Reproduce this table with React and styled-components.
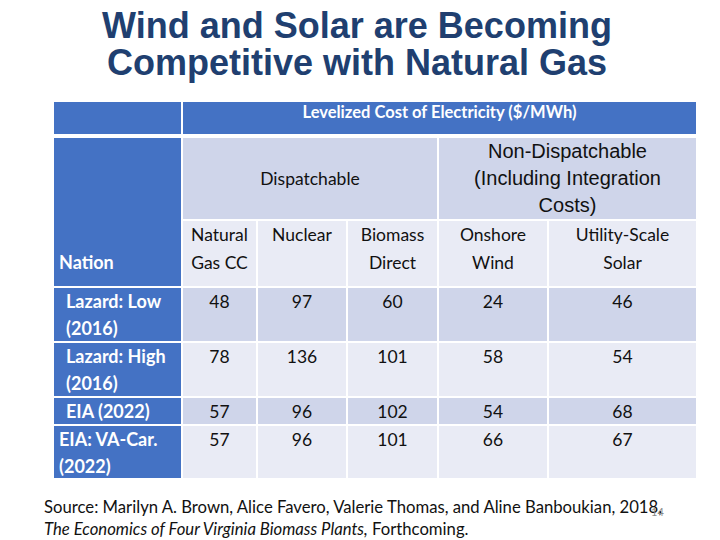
import React from 'react'
import styled, { createGlobalStyle } from 'styled-components'

const GlobalStyle = createGlobalStyle`
  html, body {
    margin: 0;
    padding: 0;
    background: #ffffff;
  }
  body {
    width: 720px;
    height: 540px;
    overflow: hidden;
    font-family: Lato, "Open Sans", sans-serif;
  }
`

const Slide = styled.div`
  width: 720px;
  height: 540px;
  display: flex;
  flex-direction: column;
  position: relative;
`

const Title = styled.h1`
  margin: 0;
  padding: 7px 6px 0 0;
  text-align: center;
  font-family: "Liberation Sans", Arial, sans-serif;
  font-weight: 700;
  font-size: 36px;
  line-height: 37px;
  color: #203f70;
`

const Table = styled.div`
  margin: 21px 0 0 54px;
  width: 642px;
  display: grid;
  grid-template-columns: 127px 73px 88px 89px 108px 147px;
  grid-template-rows: 34px 81px 65px 53px 53px 26px 52px;
  gap: 2px;
`

const HeadCell = styled.div`
  grid-column: ${p => p.$col || 'auto'};
  margin-bottom: 2px;
  background: #4472c4;
  color: #ffffff;
  font-weight: 700;
  font-size: 16.5px;
  line-height: 20px;
  text-align: center;
`

const NationCell = styled.div`
  grid-column: 1;
  grid-row: ${p => p.$row || 'auto'};
  background: #4472c4;
  color: #ffffff;
  font-weight: 700;
  font-size: 18px;
  line-height: 27px;
  padding: 0 0 0 ${p => (p.$indent ? 12 : 5)}px;
  display: flex;
  flex-direction: column;
  justify-content: ${p => (p.$bottom ? 'flex-end' : 'flex-start')};
  padding-bottom: ${p => (p.$bottom ? 10 : 0)}px;
`

const GroupCell = styled.div`
  grid-column: ${p => p.$col};
  background: #cfd5ea;
  color: #111111;
  display: flex;
  align-items: center;
  justify-content: center;
  text-align: center;
  font-size: ${p => (p.$arial ? 20 : 17.5)}px;
  font-family: ${p => (p.$arial ? '"Liberation Sans", Arial, sans-serif' : 'inherit')};
  line-height: 27px;
`

const Cell = styled.div`
  background: ${p => (p.$dark ? '#cfd5ea' : '#e9ebf5')};
  color: #111111;
  font-size: 17.5px;
  line-height: ${p => p.$lh || 27}px;
  text-align: center;
`

const Source = styled.div`
  margin: 18px 0 0 44px;
  font-size: 16.7px;
  line-height: 22px;
  color: #111111;
  position: relative;
  width: 670px;
  white-space: nowrap;
`

const PageNum = styled.span`
  position: absolute;
  left: 607px;
  top: 5px;
  font-size: 11px;
  color: #8a8a8a;
`

const columns = [
  ['Natural', 'Gas CC'],
  ['Nuclear'],
  ['Biomass', 'Direct'],
  ['Onshore', 'Wind'],
  ['Utility-Scale', 'Solar'],
]

const rows = [
  { label: ['Lazard: Low', '(2016)'], indent: true, values: [48, 97, 60, 24, 46] },
  { label: ['Lazard: High', '(2016)'], indent: true, values: [78, 136, 101, 58, 54] },
  { label: ['EIA (2022)'], indent: true, values: [57, 96, 102, 54, 68] },
  { label: ['EIA: VA-Car.', '(2022)'], values: [57, 96, 101, 66, 67] },
]

const Lines = ({ lines }) => lines.map((l, i) => <div key={i}>{l}</div>)

export default function App() {
  return (
    <Slide>
      <GlobalStyle />
      <Title>
        Wind and Solar are Becoming
        <br />
        Competitive with Natural Gas
      </Title>

      <Table>
        <HeadCell $col="1" />
        <HeadCell $col="2 / 7">Levelized Cost of Electricity ($/MWh)</HeadCell>

        <NationCell $row="2 / 4" $bottom>Nation</NationCell>
        <GroupCell $col="2 / 5">Dispatchable</GroupCell>
        <GroupCell $col="5 / 7" $arial>
          Non-Dispatchable
          <br />
          (Including Integration
          <br />
          Costs)
        </GroupCell>

        {columns.map((c, i) => (
          <Cell key={i} $lh={28}>
            <Lines lines={c} />
          </Cell>
        ))}

        {rows.map((r, ri) => (
          <React.Fragment key={ri}>
            <NationCell $indent={r.indent}>
              <Lines lines={r.label} />
            </NationCell>
            {r.values.map((v, vi) => (
              <Cell key={vi} $dark={ri % 2 === 0}>{v}</Cell>
            ))}
          </React.Fragment>
        ))}
      </Table>

      <Source>
        Source: Marilyn A. Brown, Alice Favero, Valerie Thomas, and Aline Banboukian, 2018,
        <br />
        <i>The Economics of Four Virginia Biomass Plants,</i> Forthcoming.
        <PageNum>14</PageNum>
      </Source>
    </Slide>
  )
}
